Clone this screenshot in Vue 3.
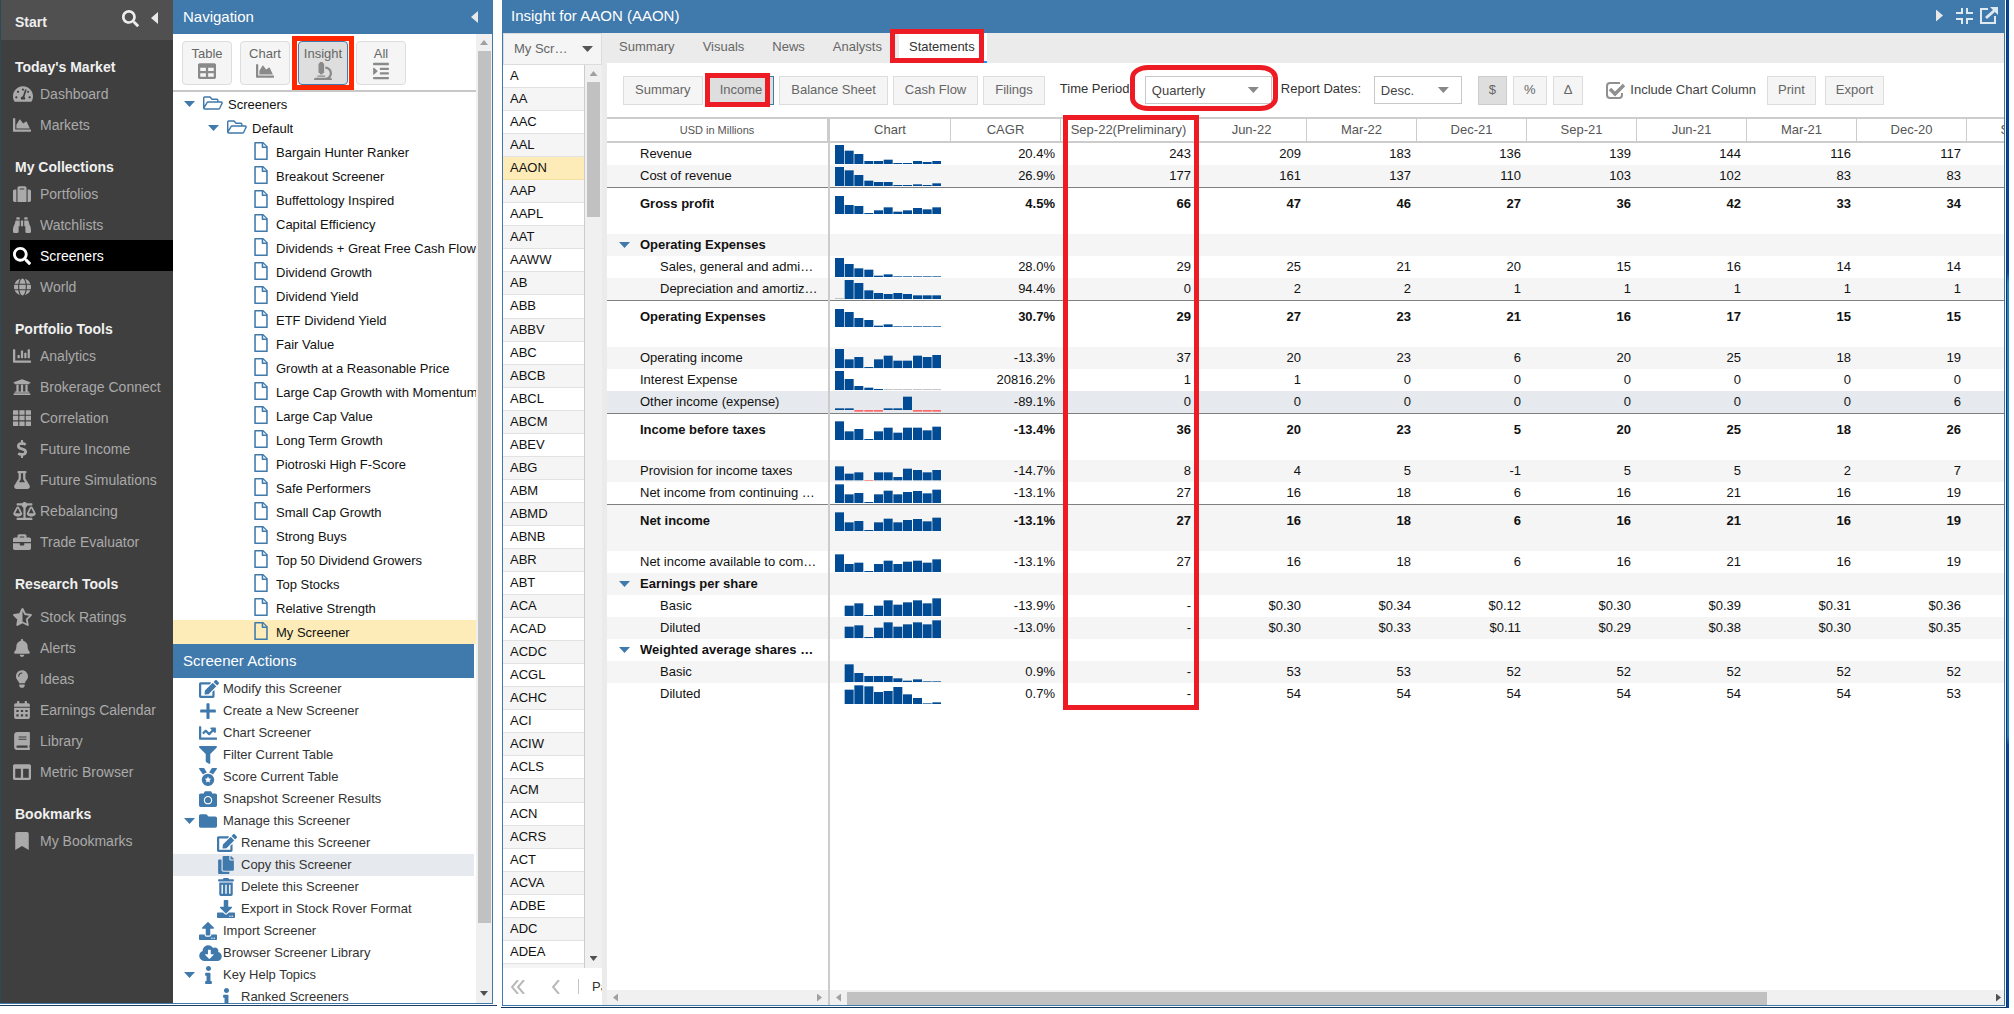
<script setup>
import { h, ref } from 'vue'

const icons = {
  search: [512, 'M505 442.7L405.3 343c-4.5-4.5-10.6-7-17-7H372c27.6-35.3 44-79.7 44-128C416 93.1 322.9 0 208 0S0 93.1 0 208s93.1 208 208 208c48.3 0 92.7-16.4 128-44v16.3c0 6.4 2.5 12.5 7 17l99.7 99.7c9.4 9.4 24.6 9.4 33.9 0l28.3-28.3c9.4-9.4 9.4-24.6.1-34zM208 336c-70.7 0-128-57.2-128-128 0-70.7 57.2-128 128-128 70.7 0 128 57.2 128 128 0 70.7-57.2 128-128 128z'],
  area: [512, 'M500 384c6.6 0 12 5.4 12 12v40c0 6.6-5.4 12-12 12H12c-6.6 0-12-5.4-12-12V76c0-6.6 5.4-12 12-12h40c6.6 0 12 5.4 12 12v308h436zM372.7 159.5L288 216l-85.3-113.7c-5.1-6.8-15.5-6.3-19.9 1L96 248v104h384l-89.9-187.8c-3.2-6.5-11.4-8.7-17.4-4.7z'],
  bars: [512, 'M332.8 320h38.4c6.4 0 12.8-6.4 12.8-12.8V172.8c0-6.4-6.4-12.8-12.8-12.8h-38.4c-6.4 0-12.8 6.4-12.8 12.8v134.4c0 6.4 6.4 12.8 12.8 12.8zm96 0h38.4c6.4 0 12.8-6.4 12.8-12.8V76.8c0-6.4-6.4-12.8-12.8-12.8h-38.4c-6.4 0-12.8 6.4-12.8 12.8v230.4c0 6.4 6.4 12.8 12.8 12.8zm-288 0h38.4c6.4 0 12.8-6.4 12.8-12.8v-70.4c0-6.4-6.4-12.8-12.8-12.8h-38.4c-6.4 0-12.8 6.4-12.8 12.8v70.4c0 6.4 6.4 12.8 12.8 12.8zm96 0h38.4c6.4 0 12.8-6.4 12.8-12.8V108.8c0-6.4-6.4-12.8-12.8-12.8h-38.4c-6.4 0-12.8 6.4-12.8 12.8v198.4c0 6.4 6.4 12.8 12.8 12.8zM496 384H64V80c0-8.84-7.16-16-16-16H16C7.16 64 0 71.16 0 80v336c0 17.67 14.33 32 32 32h464c8.84 0 16-7.16 16-16v-32c0-8.84-7.16-16-16-16z'],
  gauge: [576, 'M288 32C128.94 32 0 160.94 0 320c0 52.8 14.25 102.26 39.06 144.8 5.61 9.62 16.3 15.2 27.44 15.2h443c11.14 0 21.83-5.58 27.44-15.2C561.75 422.26 576 372.8 576 320c0-159.06-128.94-288-288-288zm0 64c14.71 0 26.58 10.13 30.32 23.65-1.11 2.26-2.64 4.23-3.45 6.67l-9.22 27.67c-5.13 3.49-10.97 6.01-17.64 6.01-17.67 0-32-14.33-32-32S270.33 96 288 96zM96 384c-17.67 0-32-14.33-32-32s14.33-32 32-32 32 14.33 32 32-14.33 32-32 32zm48-160c-17.67 0-32-14.33-32-32s14.33-32 32-32 32 14.33 32 32-14.33 32-32 32zm246.77-72.41l-61.33 184C343.13 347.33 352 364.54 352 384c0 11.72-3.38 22.55-8.88 32H232.88c-5.5-9.45-8.88-20.28-8.88-32 0-33.94 26.5-61.43 59.9-63.59l61.34-184.01c4.17-12.56 17.73-19.45 30.36-15.17 12.57 4.19 19.35 17.79 15.17 30.36zm14.66 57.2l15.52-46.55c3.47-1.29 7.13-2.23 11.05-2.23 17.67 0 32 14.33 32 32s-14.33 32-32 32c-11.38-.01-20.89-6.28-26.57-15.22zM480 384c-17.67 0-32-14.33-32-32s14.33-32 32-32 32 14.33 32 32-14.33 32-32 32z'],
  suitcase: [512, 'M128 480h256V80c0-26.5-21.5-48-48-48H176c-26.5 0-48 21.5-48 48v400zm64-384h128v32H192V96zm320 80v256c0 26.5-21.5 48-48 48h-48V128h48c26.5 0 48 21.5 48 48zM96 480H48c-26.5 0-48-21.5-48-48V176c0-26.5 21.5-48 48-48h48v352z'],
  binoculars: [512, 'M416 48c0-8.84-7.16-16-16-16h-64c-8.84 0-16 7.16-16 16v48h96V48zM63.91 159.99C61.4 253.84 3.46 274.22 0 404v44c0 17.67 14.33 32 32 32h96c17.67 0 32-14.33 32-32V288h32V128H95.84c-17.63 0-31.45 14.37-31.93 31.99zm384.18 0c-.48-17.62-14.3-31.99-31.93-31.99H320v160h32v160c0 17.67 14.33 32 32 32h96c17.67 0 32-14.33 32-32v-44c-3.46-129.78-61.4-150.16-63.91-244.01zM176 32h-64c-8.84 0-16 7.16-16 16v48h96V48c0-8.84-7.16-16-16-16zm48 256h64V128h-64v160z'],
  globe: [496, 'M336.5 160C322 70.7 287.8 8 248 8s-74 62.7-88.5 152h177zM152 256c0 22.2 1.2 43.5 3.3 64h185.3c2.1-20.5 3.3-41.8 3.3-64s-1.2-43.5-3.3-64H155.3c-2.1 20.5-3.3 41.8-3.3 64zm324.7-96c-28.6-67.9-86.5-120.4-158-141.6 24.4 33.8 41.2 84.7 50 141.6h108zM177.2 18.4C105.8 39.6 47.8 92.1 19.3 160h108c8.7-56.9 25.5-107.8 49.9-141.6zM487.4 192H372.7c2.1 21 3.3 42.5 3.3 64s-1.2 43-3.3 64h114.6c5.5-20.5 8.6-41.8 8.6-64s-3.1-43.5-8.5-64zM120 256c0-21.5 1.2-43 3.3-64H8.6C3.2 212.5 0 233.8 0 256s3.2 43.5 8.6 64h114.6c-2-21-3.2-42.5-3.2-64zm39.5 96c14.5 89.3 48.7 152 88.5 152s74-62.7 88.5-152h-177zm159.3 141.6c71.4-21.2 129.4-73.7 158-141.6h-108c-8.8 56.9-25.6 107.8-50 141.6zM19.3 352c28.6 67.9 86.5 120.4 158 141.6-24.4-33.8-41.2-84.7-50-141.6h-108z'],
  bank: [512, 'M496 128v16a8 8 0 0 1-8 8h-24v12c0 6.627-5.373 12-12 12H60c-6.627 0-12-5.373-12-12v-12H24a8 8 0 0 1-8-8v-16a8 8 0 0 1 4.941-7.392l232-88a7.996 7.996 0 0 1 6.118 0l232 88A8 8 0 0 1 496 128zm-24 304H40c-13.255 0-24 10.745-24 24v16a8 8 0 0 0 8 8h464a8 8 0 0 0 8-8v-16c0-13.255-10.745-24-24-24zM96 192v192H60c-6.627 0-12 5.373-12 12v20h416v-20c0-6.627-5.373-12-12-12h-36V192h-64v192h-64V192h-64v192h-64V192H96z'],
  grid: [512, 'M16 32h133v128H0V48q0-16 16-16zM181 32h149v128H181zM362 32h134q16 0 16 16v112H362zM0 192h149v128H0zM181 192h149v128H181zM362 192h150v128H362zM0 352h149v128H16q-16 0-16-16zM181 352h149v128H181zM362 352h150v112q0 16-16 16H362z'],
  dollar: [288, 'M209.2 233.4l-108-31.6C88.7 198.2 80 186.5 80 173.5c0-16.3 13.2-29.5 29.5-29.5h66.3c12.2 0 24.2 3.7 34.2 10.5 6.1 4.1 14.3 3.1 19.5-2l34.8-34c7.1-6.9 6.1-18.4-1.8-24.5C238 74.8 207.4 64.1 176 64V16c0-8.8-7.2-16-16-16h-32c-8.8 0-16 7.2-16 16v48h-2.5C45.8 64-5.4 118.7.5 183.6c4.2 46.1 39.4 83.6 83.8 96.6l102.5 30c12.5 3.7 21.2 15.3 21.2 28.3 0 16.3-13.2 29.5-29.5 29.5h-66.3C100 368 88 364.3 78 357.5c-6.1-4.1-14.3-3.1-19.5 2l-34.8 34c-7.1 6.9-6.1 18.4 1.8 24.5 24.5 19.2 55.1 29.9 86.5 30v48c0 8.8 7.2 16 16 16h32c8.8 0 16-7.2 16-16v-48.2c46.6-.9 90.3-28.6 105.7-72.7 21.5-61.6-14.6-124.8-72.5-141.7z'],
  flask: [448, 'M437.2 403.5L320 215V64h8c13.3 0 24-10.7 24-24V24c0-13.3-10.7-24-24-24H120c-13.3 0-24 10.7-24 24v16c0 13.3 10.7 24 24 24h8v151L10.8 403.5C-18.5 450.6 15.3 512 70.9 512h306.2c55.7 0 89.4-61.5 60.1-108.5zM137.9 320l48.2-77.6c3.7-5.2 5.8-11.6 5.8-18.4V64h64v160c0 6.9 2.2 13.2 5.8 18.4l48.2 77.6h-172z'],
  scale: [640, 'M256 336h-.02c0-16.18 1.34-8.73-85.05-181.51-17.65-35.29-68.19-35.36-85.87 0C-2.06 328.75.02 320.33.02 336H0c0 44.18 57.31 80 128 80s128-35.82 128-80zM128 176l72 144H56l72-144zm511.98 160c0-16.18 1.34-8.73-85.05-181.51-17.65-35.29-68.19-35.36-85.87 0-87.12 174.26-85.04 165.84-85.04 181.51H384c0 44.18 57.31 80 128 80s128-35.82 128-80h-.02zM440 320l72-144 72 144H440zm88 128H352V153.25c23.51-10.29 41.16-31.48 46.39-57.25H528c8.84 0 16-7.16 16-16V48c0-8.84-7.16-16-16-16H383.64C369.04 12.68 346.09 0 320 0s-49.04 12.68-63.64 32H112c-8.84 0-16 7.16-16 16v32c0 8.84 7.16 16 16 16h129.61c5.23 25.76 22.87 46.96 46.39 57.25V448H112c-8.84 0-16 7.16-16 16v32c0 8.84 7.16 16 16 16h416c8.84 0 16-7.16 16-16v-32c0-8.84-7.16-16-16-16z'],
  briefcase: [512, 'M320 336c0 8.84-7.16 16-16 16h-96c-8.84 0-16-7.16-16-16v-48H0v144c0 25.6 22.4 48 48 48h416c25.6 0 48-22.4 48-48V288H320v48zm144-208h-80V80c0-25.6-22.4-48-48-48H176c-25.6 0-48 22.4-48 48v48H48c-25.6 0-48 22.4-48 48v80h512v-80c0-25.6-22.4-48-48-48zm-144 0H192V96h128v32z'],
  star: [536, 'M268 0q18 0 26 16l67 136 150 22q30 6 23 34-2 7-8 12L418 326l26 149q3 32-28 34-7 0-14-4l-134-70-134 70q-30 13-42-16-1-6 0-14l26-149L10 220q-20-22 0-42 6-4 15-4l150-22L242 16q8-16 26-16zM268 382l118 62-23-131 96-93-133-19L268 82z'],
  bell: [448, 'M224 512c35.32 0 63.97-28.65 63.97-64H160.03c0 35.35 28.65 64 63.97 64zm215.39-149.71c-19.32-20.76-55.47-51.99-55.47-154.29 0-77.7-54.48-139.9-127.94-155.16V32c0-17.67-14.32-32-31.98-32s-31.98 14.33-31.98 32v20.84C118.56 68.1 64.08 130.3 64.08 208c0 102.3-36.15 133.53-55.47 154.29-6 6.45-8.66 14.16-8.61 21.71.11 16.4 12.98 32 32.1 32h383.8c19.12 0 32-15.6 32.1-32 .05-7.55-2.61-15.27-8.61-21.71z'],
  bulb: [352, 'M96.06 454.35c.01 6.29 1.87 12.45 5.36 17.69l17.09 25.69a31.99 31.99 0 0 0 26.64 14.28h61.71a31.99 31.99 0 0 0 26.64-14.28l17.09-25.69a31.989 31.989 0 0 0 5.36-17.69l.04-38.35H96.01l.05 38.35zM0 176c0 44.37 16.45 84.85 43.56 115.78 16.52 18.85 42.36 58.23 52.21 91.45.04.26.07.52.11.78h160.24c.04-.26.07-.51.11-.78 9.85-33.22 35.69-72.6 52.21-91.45C335.55 260.85 352 220.37 352 176 352 78.61 272.91-.3 175.45 0 73.44.31 0 82.97 0 176zm176-80c-44.11 0-80 35.89-80 80 0 8.84-7.16 16-16 16s-16-7.16-16-16c0-61.76 50.24-112 112-112 8.84 0 16 7.16 16 16s-7.16 16-16 16z'],
  calendar: [448, 'M96 0h40q12 0 12 12v52h152V12q0-12 12-12h40q12 0 12 12v52h36q48 0 48 48v48H0v-48q0-48 48-48h36V12q0-12 12-12zM0 192h448v272q0 48-48 48H48q-48 0-48-48zM64 256v60h64v-60zM192 256v60h64v-60zM320 256v60h64v-60zM64 380v60h64v-60zM192 380v60h64v-60zM320 380v60h64v-60z'],
  book: [448, 'M96 0h328q24 0 24 24v336q0 12-10 20-8 28 0 56 10 4 10 18v34q0 24-24 24H96Q0 512 0 416V96Q0 0 96 0zM128 128v30h224v-30zM128 192v30h224v-30zM96 384q-32 4-32 32t32 32h288q-6-32 0-64z'],
  columns: [512, 'M464 32H48C21.49 32 0 53.49 0 80v352c0 26.51 21.49 48 48 48h416c26.51 0 48-21.49 48-48V80c0-26.51-21.49-48-48-48zM224 416H64V160h160v256zm224 0H288V160h160v256z'],
  bookmark: [384, 'M0 512V48C0 21.49 21.49 0 48 0h288c26.51 0 48 21.49 48 48v464L192 400 0 512z'],
  table: [512, 'M464 32H48C21.49 32 0 53.49 0 80v352c0 26.51 21.49 48 48 48h416c26.51 0 48-21.49 48-48V80c0-26.51-21.49-48-48-48zM224 416H64v-96h160v96zm0-160H64v-96h160v96zm224 160H288v-96h160v96zm0-160H288v-96h160v96z'],
  microscope: [512, 'M160 320h12v16c0 8.84 7.16 16 16 16h40c8.84 0 16-7.16 16-16v-16h12c17.67 0 32-14.33 32-32V64c0-17.67-14.33-32-32-32V16c0-8.84-7.16-16-16-16h-64c-8.84 0-16 7.16-16 16v16c-17.67 0-32 14.33-32 32v224c0 17.67 14.33 32 32 32zm304 128h-1.29C493.24 413.99 512 369.2 512 320c0-105.88-86.12-192-192-192v64c70.58 0 128 57.42 128 128s-57.42 128-128 128H48c-26.51 0-48 21.49-48 48 0 8.84 7.16 16 16 16h480c8.84 0 16-7.16 16-16 0-26.51-21.49-48-48-48zm-360-32h208c4.42 0 8-3.58 8-8v-16c0-4.42-3.58-8-8-8H104c-4.42 0-8 3.58-8 8v16c0 4.42 3.58 8 8 8z'],
  indent: [448, 'M12 24h424q12 0 12 12v42q0 12-12 12H12Q0 90 0 78V36q0-12 12-12zM204 160h232q12 0 12 12v40q0 12-12 12H204q-12 0-12-12v-40q0-12 12-12zM204 290h232q12 0 12 12v40q0 12-12 12H204q-12 0-12-12v-40q0-12 12-12zM12 424h424q12 0 12 12v42q0 12-12 12H12q-12 0-12-12v-42q0-12 12-12zM0 176q4-24 27-12l96 85q10 11 0 22l-96 86q-23 10-27-12z'],
  edit: [576, 'M402.6 83.2l90.2 90.2c3.8 3.8 3.8 10 0 13.8L274.4 405.6l-92.8 10.3c-12.4 1.4-22.9-9.1-21.5-21.5l10.3-92.8L388.8 83.2c3.8-3.8 10-3.8 13.8 0zm162-22.9l-48.8-48.8c-15.2-15.2-39.9-15.2-55.2 0l-35.4 35.4c-3.8 3.8-3.8 10 0 13.8l90.2 90.2c3.8 3.8 10 3.8 13.8 0l35.4-35.4c15.2-15.3 15.2-40 0-55.2zM384 346.2V448H64V128h229.8c3.2 0 6.2-1.3 8.5-3.5l40-40c7.6-7.6 2.2-20.5-8.5-20.5H48C21.5 64 0 85.5 0 112v352c0 26.5 21.5 48 48 48h352c26.5 0 48-21.5 48-48V306.2c0-10.7-12.9-16-20.5-8.5l-40 40c-2.2 2.3-3.5 5.3-3.5 8.5z'],
  plus: [448, 'M424 212H268V56q0-24-24-24h-40q-24 0-24 24v156H24q-24 0-24 24v40q0 24 24 24h156v156q0 24 24 24h40q24 0 24-24V300h156q24 0 24-24v-40q0-24-24-24z'],
  line: [512, 'M496 384H64V80c0-8.84-7.16-16-16-16H16C7.16 64 0 71.16 0 80v336c0 17.67 14.33 32 32 32h464c8.84 0 16-7.16 16-16v-32c0-8.84-7.16-16-16-16zM464 96H345.94c-21.38 0-32.09 25.85-16.97 40.97l32.4 32.4L288 242.75l-73.37-73.37c-12.5-12.5-32.76-12.5-45.25 0l-68.69 68.69c-6.25 6.25-6.25 16.38 0 22.63l22.62 22.62c6.25 6.25 16.38 6.25 22.63 0L192 237.25l73.37 73.37c12.5 12.5 32.76 12.5 45.25 0l96-96 32.4 32.4c15.12 15.12 40.97 4.41 40.97-16.97V112c.01-8.84-7.15-16-15.99-16z'],
  filter: [512, 'M487.976 0H24.028C2.71 0-8.047 25.866 7.058 40.971L192 225.941V432c0 7.831 3.821 15.17 10.237 19.662l80 55.98C298.02 518.69 320 507.493 320 487.98V225.941l184.947-184.97C520.021 25.896 509.338 0 487.976 0z'],
  medal: [512, 'M223.75 130.75L154.62 15.54A31.997 31.997 0 0 0 127.18 0H16.03C3.08 0-4.5 14.57 2.92 25.18l111.27 158.96c29.72-27.77 67.52-46.83 109.56-53.39zM495.97 0H384.82c-11.24 0-21.66 5.9-27.44 15.54l-69.13 115.21c42.04 6.56 79.84 25.62 109.56 53.38L509.08 25.18C516.5 14.57 508.92 0 495.97 0zM256 160c-97.2 0-176 78.8-176 176s78.8 176 176 176 176-78.8 176-176-78.8-176-176-176zM256 240l28 57 63 9-46 44 11 63-56-30-56 30 11-63-46-44 63-9z'],
  camera: [512, 'M512 144v288c0 26.5-21.5 48-48 48H48c-26.5 0-48-21.5-48-48V144c0-26.5 21.5-48 48-48h88l12.3-32.9c7-18.7 24.9-31.1 44.9-31.1h125.5c20 0 37.9 12.4 44.9 31.1L376 96h88c26.5 0 48 21.5 48 48zM376 288c0-66.2-53.8-120-120-120s-120 53.8-120 120 53.8 120 120 120 120-53.8 120-120zm-32 0c0 48.5-39.5 88-88 88s-88-39.5-88-88 39.5-88 88-88 88 39.5 88 88z'],
  folder: [512, 'M464 128H272l-64-64H48C21.49 64 0 85.49 0 112v288c0 26.51 21.49 48 48 48h416c26.51 0 48-21.49 48-48V176c0-26.51-21.49-48-48-48z'],
  copy: [448, 'M320 448v40c0 13.255-10.745 24-24 24H24c-13.255 0-24-10.745-24-24V120c0-13.255 10.745-24 24-24h72v296c0 30.879 25.121 56 56 56h168zm0-344V0H152c-13.255 0-24 10.745-24 24v368c0 13.255 10.745 24 24 24h272c13.255 0 24-10.745 24-24V128H344c-13.2 0-24-10.8-24-24zm120.971-31.029L375.029 7.029A24 24 0 0 0 358.059 0H352v96h96v-6.059a24 24 0 0 0-7.029-16.97z'],
  trash: [448, 'M16 32h120l12-22q6-10 18-10h116q12 0 18 10l12 22h120q16 0 16 16v32q0 16-16 16H16Q0 96 0 80V48q0-16 16-16zM32 128h384v336q0 48-48 48H80q-48 0-48-48zM96 190v256h40V190zM204 190v256h40V190zM312 190v256h40V190z'],
  download: [512, 'M216 0h80c13.3 0 24 10.7 24 24v168h87.7c17.8 0 26.7 21.5 14.1 34.1L269.7 378.3c-7.5 7.5-19.8 7.5-27.3 0L90.1 226.1c-12.6-12.6-3.7-34.1 14.1-34.1H192V24c0-13.3 10.7-24 24-24zm296 376v112c0 13.3-10.7 24-24 24H24c-13.3 0-24-10.7-24-24V376c0-13.3 10.7-24 24-24h146.7l49 49c20.1 20.1 52.5 20.1 72.6 0l49-49H488c13.3 0 24 10.7 24 24zm-124 88c0-11-9-20-20-20s-20 9-20 20 9 20 20 20 20-9 20-20zm64 0c0-11-9-20-20-20s-20 9-20 20 9 20 20 20 20-9 20-20z'],
  upload: [512, 'M296 384h-80c-13.3 0-24-10.7-24-24V192h-87.7c-17.8 0-26.7-21.5-14.1-34.1L242.3 5.7c7.5-7.5 19.8-7.5 27.3 0l152.2 152.2c12.6 12.6 3.7 34.1-14.1 34.1H320v168c0 13.3-10.7 24-24 24zm216-8v112c0 13.3-10.7 24-24 24H24c-13.3 0-24-10.7-24-24V376c0-13.3 10.7-24 24-24h136v8c0 30.9 25.1 56 56 56h80c30.9 0 56-25.1 56-56v-8h136c13.3 0 24 10.7 24 24zm-124 88c0-11-9-20-20-20s-20 9-20 20 9 20 20 20 20-9 20-20zm64 0c0-11-9-20-20-20s-20 9-20 20 9 20 20 20 20-9 20-20z'],
  cloud: [640, 'M537.6 226.6c4.1-10.7 6.4-22.4 6.4-34.6 0-53-43-96-96-96-19.7 0-38.1 6-53.3 16.2C367 64.2 315.3 32 256 32c-88.4 0-160 71.6-160 160 0 2.7.1 5.4.2 8.1C40.2 219.8 0 273.2 0 336c0 79.5 64.5 144 144 144h368c70.7 0 128-57.3 128-128 0-61.9-44-113.6-102.4-125.4zm-132.9 88.7L299.3 420.7c-6.2 6.2-16.4 6.2-22.6 0L171.3 315.3c-10.1-10.1-2.9-27.3 11.3-27.3H248V176c0-8.8 7.2-16 16-16h48c8.8 0 16 7.2 16 16v112h65.4c14.2 0 21.4 17.2 11.3 27.3z'],
  info: [192, 'M20 424.229h20V279.771H20c-11.046 0-20-8.954-20-20V212c0-11.046 8.954-20 20-20h112c11.046 0 20 8.954 20 20v212.229h20c11.046 0 20 8.954 20 20V492c0 11.046-8.954 20-20 20H20c-11.046 0-20-8.954-20-20v-47.771c0-11.046 8.954-20 20-20zM96 0C56.235 0 24 32.235 24 72s32.235 72 72 72 72-32.235 72-72S135.764 0 96 0z'],
  file: [384, 'M40 0h216L384 128v360q0 24-24 24H24q-24 0-24-24V24Q0 0 24 0zM44 44v424h296V172H236q-24 0-24-24V44zM256 48v80h80z'],
  openFolder: [576, 'M48 64h160l64 64h128q48 0 48 48v32h84q44 8 40 52l-76 160q-14 28-44 28H48q-48 0-48-48V112q0-48 48-48zM42 112v218l58-98q14-24 44-24h262v-30q0-8-8-8H254l-64-64H50q-8 0-8 6zM150 250q-10 0-16 8L48 402q0 4 6 4h396q10 0 14-8l66-140q0-8-6-8z']
}

const Icon = ({ name, size = 18 }) => {
  const [w, d] = icons[name]
  return h('svg', { viewBox: `0 0 ${w} 512`, width: Math.round((w * size) / 512), height: size, 'aria-hidden': 'true' }, [
    h('path', { d, fill: 'currentColor', 'fill-rule': 'evenodd' })
  ])
}
Icon.props = ['name', 'size']

const menu = [
  { title: "Today's Market", items: [['gauge', 'Dashboard'], ['area', 'Markets']] },
  { title: 'My Collections', items: [['suitcase', 'Portfolios'], ['binoculars', 'Watchlists'], ['search', 'Screeners'], ['globe', 'World']] },
  { title: 'Portfolio Tools', items: [['bars', 'Analytics'], ['bank', 'Brokerage Connect'], ['grid', 'Correlation'], ['dollar', 'Future Income'], ['flask', 'Future Simulations'], ['scale', 'Rebalancing'], ['briefcase', 'Trade Evaluator']] },
  { title: 'Research Tools', roomy: true, items: [['star', 'Stock Ratings'], ['bell', 'Alerts'], ['bulb', 'Ideas'], ['calendar', 'Earnings Calendar'], ['book', 'Library'], ['columns', 'Metric Browser']] },
  { title: 'Bookmarks', items: [['bookmark', 'My Bookmarks']] }
]

const modes = [['table', 'Table'], ['area', 'Chart'], ['microscope', 'Insight'], ['indent', 'All']]

const screeners = ['Bargain Hunter Ranker', 'Breakout Screener', 'Buffettology Inspired', 'Capital Efficiency', 'Dividends + Great Free Cash Flow', 'Dividend Growth', 'Dividend Yield', 'ETF Dividend Yield', 'Fair Value', 'Growth at a Reasonable Price', 'Large Cap Growth with Momentum', 'Large Cap Value', 'Long Term Growth', 'Piotroski High F-Score', 'Safe Performers', 'Small Cap Growth', 'Strong Buys', 'Top 50 Dividend Growers', 'Top Stocks', 'Relative Strength', 'My Screener']

const actions = [
  { icon: 'edit', text: 'Modify this Screener' },
  { icon: 'plus', text: 'Create a New Screener' },
  { icon: 'line', text: 'Chart Screener' },
  { icon: 'filter', text: 'Filter Current Table' },
  { icon: 'medal', text: 'Score Current Table' },
  { icon: 'camera', text: 'Snapshot Screener Results' },
  { icon: 'folder', text: 'Manage this Screener', open: true },
  { icon: 'edit', text: 'Rename this Screener', sub: true },
  { icon: 'copy', text: 'Copy this Screener', sub: true, hot: true },
  { icon: 'trash', text: 'Delete this Screener', sub: true },
  { icon: 'download', text: 'Export in Stock Rover Format', sub: true },
  { icon: 'upload', text: 'Import Screener' },
  { icon: 'cloud', text: 'Browser Screener Library' },
  { icon: 'info', text: 'Key Help Topics', open: true },
  { icon: 'info', text: 'Ranked Screeners', sub: true }
]

const tickers = 'A AA AAC AAL AAON AAP AAPL AAT AAWW AB ABB ABBV ABC ABCB ABCL ABCM ABEV ABG ABM ABMD ABNB ABR ABT ACA ACAD ACDC ACGL ACHC ACI ACIW ACLS ACM ACN ACRS ACT ACVA ADBE ADC ADEA'.split(' ')

const tabs = ['Summary', 'Visuals', 'News', 'Analysts', 'Statements']
const reports = ['Summary', 'Income', 'Balance Sheet', 'Cash Flow', 'Filings']
const periods = ['Sep-22(Preliminary)', 'Jun-22', 'Mar-22', 'Dec-21', 'Sep-21', 'Jun-21', 'Mar-21', 'Dec-20', 'Sep-20']

const netBars = [56, 26, 30, 3, 26, 37, 26, 33, 36, 29, 40]
const rows = [
  { name: 'Revenue', bars: [57, 40, 30, 9, 9, 13, 3, 3, 9, 6, 9], v: '20.4% 243 209 183 136 139 144 116 117' },
  { name: 'Cost of revenue', bars: [57, 47, 33, 16, 12, 12, 3, 3, 5, 3, 8], v: '26.9% 177 161 137 110 103 102 83 83' },
  { name: 'Gross profit', kind: 'total', bars: [54, 27, 24, 3, 11, 20, 7, 11, 18, 14, 20], v: '4.5% 66 47 46 27 36 42 33 34' },
  { name: 'Operating Expenses', kind: 'group' },
  { name: 'Sales, general and administrative', kind: 'child', bars: [57, 39, 26, 22, 4, 8, 2, 2, 2, 2, 2], v: '28.0% 29 25 21 20 15 16 14 14' },
  { name: 'Depreciation and amortization', kind: 'child', bars: [0, 57, 48, 26, 18, 15, 18, 15, 11, 11, 11], v: '94.4% 0 2 2 1 1 1 1 1' },
  { name: 'Operating Expenses', kind: 'total', bars: [54, 45, 27, 21, 4, 8, 2, 2, 2, 2, 2], v: '30.7% 29 27 23 21 16 17 15 15' },
  { name: 'Operating income', bars: [57, 26, 33, 3, 26, 37, 22, 22, 37, 33, 39], v: '-13.3% 37 20 23 6 20 25 18 19' },
  { name: 'Interest Expense', bars: [57, 33, 12, 7, 3, 0, 0, 0, 0, 0, 0], v: '20816.2% 1 1 0 0 0 0 0 0' },
  { name: 'Other income (expense)', hot: true, zero: 57, bars: [5, 5, -5, -5, -5, 5, 5, 40, -5, -5, -5], v: '-89.1% 0 0 0 0 0 0 0 6' },
  { name: 'Income before taxes', kind: 'total', bars: [56, 26, 33, 3, 26, 37, 22, 37, 37, 29, 40], v: '-13.4% 36 20 23 5 20 25 18 26' },
  { name: 'Provision for income taxes', zero: 61, bars: [42, 20, 24, -2, 24, 24, 10, 35, 31, 24, 31], v: '-14.7% 8 4 5 -1 5 5 2 7' },
  { name: 'Net income from continuing operations', bars: netBars, v: '-13.1% 27 16 18 6 16 21 16 19' },
  { name: 'Net income', kind: 'total', bars: netBars, v: '-13.1% 27 16 18 6 16 21 16 19' },
  { name: 'Net income available to common', bars: [53, 24, 28, 3, 24, 34, 24, 31, 34, 28, 38], v: '-13.1% 27 16 18 6 16 21 16 19' },
  { name: 'Earnings per share', kind: 'group' },
  { name: 'Basic', kind: 'child', bars: [null, 31, 38, 3, 31, 47, 34, 41, 47, 38, 53], v: '-13.9% - $0.30 $0.34 $0.12 $0.30 $0.39 $0.31 $0.36' },
  { name: 'Diluted', kind: 'child', bars: [null, 34, 38, 3, 31, 47, 34, 41, 47, 41, 53], v: '-13.0% - $0.30 $0.33 $0.11 $0.29 $0.38 $0.30 $0.35' },
  { name: 'Weighted average shares outstanding', kind: 'group' },
  { name: 'Basic', kind: 'child', bars: [null, 53, 27, 18, 18, 18, 11, 4, 8, 2, 2], v: '0.9% - 53 53 52 52 52 52 52' },
  { name: 'Diluted', kind: 'child', bars: [null, 43, 56, 53, 36, 39, 51, 29, 18, 2, 5], v: '0.7% - 54 54 54 54 54 54 53' }
].map((r) => ({ ...r, cells: r.v ? r.v.split(' ') : Array(9).fill('') }))

const rects = (row) => {
  const zero = row.zero ?? 63
  return row.bars
    .map((b, i) => ({ b, x: Math.round(i * 29.2) }))
    .filter(({ b }) => b !== null)
    .map(({ b, x }) => ({
      x,
      y: b > 0 ? zero - b : b < 0 ? zero : zero - 2,
      h: Math.abs(b) || 2,
      fill: b > 0 ? '#004b93' : b < 0 ? '#ff6666' : '#a8a8a8'
    }))
}

const period = ref('Quarterly')
const order = ref('Desc.')
const withChart = ref(true)
</script>

<template>
  <div class="page">
    <div class="left">
      <div class="left-body">
        <nav class="sidebar" aria-label="Main">
          <header class="start">
            <span>Start</span>
            <button type="button" aria-label="Search"><Icon name="search" :size="17" /></button>
            <button type="button" class="tri-left" aria-label="Collapse menu"></button>
          </header>
          <section v-for="g in menu" :key="g.title" :class="{ roomy: g.roomy }">
            <h2>{{ g.title }}</h2>
            <a v-for="[icon, text] in g.items" :key="text" href="#" :class="{ current: text === 'Screeners' }">
              <span class="slot"><Icon :name="icon" /></span>{{ text }}
            </a>
          </section>
        </nav>

        <section class="navigation">
          <header class="bar">
            <h1>Navigation</h1>
            <button type="button" class="tri-left" aria-label="Collapse navigation"></button>
          </header>
          <div class="nav-body">
            <div class="nav-scroll">
              <div class="modes">
                <button v-for="[icon, text] in modes" :key="text" type="button" :class="{ on: text === 'Insight' }">
                  {{ text }}
                  <Icon :name="icon" />
                  <i v-if="text === 'Insight'" class="ring"></i>
                </button>
              </div>
              <ul class="tree">
                <li class="root"><i class="caret"></i><Icon name="openFolder" /><a href="#">Screeners</a></li>
                <li class="branch"><i class="caret"></i><Icon name="openFolder" /><a href="#">Default</a></li>
                <li v-for="s in screeners" :key="s" class="leaf" :class="{ picked: s === 'My Screener' }">
                  <Icon name="file" /><a href="#">{{ s }}</a>
                </li>
              </ul>
              <h2 class="bar sub-bar">Screener Actions</h2>
              <ul class="actions">
                <li v-for="a in actions" :key="a.text" :class="{ sub: a.sub, hot: a.hot }">
                  <span class="gutter"><i v-if="a.open" class="caret"></i></span>
                  <span class="slot"><Icon :name="a.icon" /></span>
                  <a href="#">{{ a.text }}</a>
                </li>
              </ul>
            </div>
            <div class="vscroll">
              <i class="up"></i>
              <i class="thumb"></i>
              <i class="down"></i>
            </div>
          </div>
        </section>
      </div>
    </div>

    <div class="frame">
      <main class="insight">
        <header class="bar">
          <h1>Insight for AAON (AAON)</h1>
          <div class="tools">
            <button type="button" class="tri-right" aria-label="Next"></button>
            <button type="button" aria-label="Shrink">
              <svg width="17" height="16" viewBox="0 0 17 16" fill="none" stroke="currentColor" stroke-width="2"><path d="M0 5h6V0M17 5h-6V0M0 11h6v5M17 11h-6v5" /></svg>
            </button>
            <button type="button" aria-label="Open in new window">
              <svg width="18" height="17" viewBox="0 0 18 17" fill="none" stroke="currentColor" stroke-width="2"><path d="M8 2H1v14h14V9" /><path d="M6 11L15 3" stroke-width="3" /><path d="M10 0h8v8z" fill="currentColor" stroke="none" /></svg>
            </button>
          </div>
        </header>

        <div class="insight-body">
          <aside class="tickers">
            <button type="button" class="combo"><span>My Screener</span><i class="caret"></i></button>
            <div class="ticker-list">
              <ul>
                <li v-for="t in tickers" :key="t" :class="{ picked: t === 'AAON' }">{{ t }}</li>
              </ul>
              <div class="vscroll">
                <i class="up"></i>
                <i class="thumb short"></i>
                <i class="down"></i>
              </div>
            </div>
            <footer class="pager">
              <button type="button" aria-label="First page"><svg width="14" height="14" viewBox="0 0 14 14"><path d="M7 0L1 7l6 7M13 0L7 7l6 7" /></svg></button>
              <button type="button" aria-label="Previous page"><svg width="8" height="14" viewBox="0 0 8 14"><path d="M7 0L1 7l6 7" /></svg></button>
              <i></i>
              <span>Page</span>
            </footer>
          </aside>

          <section class="statements">
            <div class="tabs" role="tablist">
              <button v-for="t in tabs" :key="t" type="button" role="tab" :aria-selected="t === 'Statements'" :class="{ on: t === 'Statements' }">
                {{ t }}<i v-if="t === 'Statements'" class="ring"></i>
              </button>
            </div>

            <div class="toolbar">
              <div class="reports">
                <button v-for="r in reports" :key="r" type="button" class="btn" :class="{ on: r === 'Income' }">
                  {{ r }}<i v-if="r === 'Income'" class="ring"></i>
                </button>
              </div>
              <label class="time-label" for="period">Time Period:</label>
              <div class="pick period">
                <select id="period" v-model="period"><option>Quarterly</option><option>Annual</option></select>
                <i class="caret"></i>
                <i class="ring"></i>
              </div>
              <label class="date-label" for="order">Report Dates:</label>
              <div class="pick order">
                <select id="order" v-model="order"><option>Desc.</option><option>Asc.</option></select>
                <i class="caret"></i>
              </div>
              <div class="units">
                <button type="button" class="btn grey">$</button>
                <button type="button" class="btn">%</button>
                <button type="button" class="btn">Δ</button>
              </div>
              <label class="check">
                <input v-model="withChart" type="checkbox" />
                <svg width="19" height="17" viewBox="0 0 19 17" aria-hidden="true" fill="none" stroke="#909090"><path d="M14 1H4a3 3 0 0 0-3 3v9a3 3 0 0 0 3 3h9a3 3 0 0 0 3-3v-2" stroke-width="2" /><path d="M4 7l5 5 9-9" stroke-width="3.5" /></svg>
                Include Chart Column
              </label>
              <div class="output">
                <button type="button" class="btn">Print</button>
                <button type="button" class="btn">Export</button>
              </div>
            </div>

            <div class="grid">
              <div class="locked">
                <table>
                  <thead><tr><th class="small">USD in Millions</th></tr></thead>
                  <tbody>
                    <tr v-for="(r, i) in rows" :key="i" :class="[r.kind, { hot: r.hot }]">
                      <td>
                        <div class="name"><span class="toggle"><i v-if="r.kind === 'group'" class="caret"></i></span><span class="label">{{ r.name }}</span></div>
                      </td>
                    </tr>
                  </tbody>
                </table>
                <div class="hscroll"><i class="prev"></i><i class="next"></i></div>
              </div>
              <div class="scrolling">
                <table>
                  <colgroup>
                    <col class="c-chart" /><col class="c-num" /><col class="c-wide" />
                    <col v-for="n in 8" :key="n" class="c-num" />
                  </colgroup>
                  <thead>
                    <tr><th>Chart</th><th>CAGR</th><th v-for="p in periods" :key="p">{{ p }}</th></tr>
                  </thead>
                  <tbody>
                    <tr v-for="(r, i) in rows" :key="i" :class="[r.kind, { hot: r.hot }]">
                      <td class="spark">
                        <svg v-if="r.bars" width="106" height="22" viewBox="0 0 318 66">
                          <rect v-for="b in rects(r)" :key="b.x" :x="b.x" :y="b.y" width="27" :height="b.h" :fill="b.fill" />
                        </svg>
                      </td>
                      <td v-for="(c, j) in r.cells" :key="j">{{ c }}</td>
                      <td></td>
                    </tr>
                  </tbody>
                </table>
                <div class="hscroll wide"><i class="prev"></i><i class="thumb"></i><i class="next dark"></i></div>
              </div>
              <i class="ring column-ring"></i>
            </div>
          </section>
        </div>
      </main>
    </div>
    <div class="desktop-edge"></div>
  </div>
</template>

<style>
body {
  background: #fff;
}
</style>

<style scoped>
.page,
.page * {
  box-sizing: border-box;
}
.page {
  display: flex;
  height: 100vh;
  padding-right: 5px;
  overflow: hidden;
  font: 13px/22px "Liberation Sans", Arial, sans-serif;
  color: #111;
}
button {
  position: relative;
  margin: 0;
  padding: 0;
  border: 0;
  background: none;
  color: inherit;
  font: inherit;
}
a {
  color: inherit;
  text-decoration: none;
}
ul,
h1,
h2 {
  margin: 0;
  padding: 0;
  list-style: none;
  font-weight: normal;
}
svg {
  display: block;
  flex: none;
}
.caret {
  flex: none;
  width: 11px;
  height: 6px;
  background: #4079ac;
  clip-path: polygon(0 0, 100% 0, 50% 100%);
}
.tri-left,
.tri-right {
  width: 7px;
  height: 12px;
  background: #e8e8e8;
  clip-path: polygon(100% 0, 100% 100%, 0 50%);
}
.tri-right {
  clip-path: polygon(0 0, 100% 50%, 0 100%);
}
.ring {
  position: absolute;
  z-index: 2;
  border: 5px solid #ed1c24;
  pointer-events: none;
}
.slot {
  display: flex;
  flex: none;
  justify-content: safe center;
  width: 18px;
}
.bar {
  display: flex;
  align-items: center;
  justify-content: space-between;
  height: 34px;
  flex: none;
  padding: 0 14px 0 10px;
  background: #4079ac;
  color: #fff;
  font-size: 15px;
}
.bar h1 {
  font-size: 15px;
}

/* Left side */
.left {
  flex: none;
  width: 497px;
  margin-bottom: 8px;
  padding-bottom: 1px;
  border-bottom: 1px solid #1d3f66;
}
.left-body {
  display: flex;
  width: 493px;
  height: 100%;
  border-bottom: 1px solid #4079ac;
  overflow: hidden;
}
.sidebar {
  flex: none;
  width: 173px;
  border-left: 1px solid #2b4a58;
  background: #3f3f3f;
  color: #aaa;
  font-size: 14px;
}
.start {
  display: flex;
  align-items: center;
  height: 40px;
  padding: 0 15px 4px 14px;
  background: #505050;
  color: #ededed;
  font-weight: bold;
}
.start span {
  flex: 1;
  padding-top: 8px;
}
.start .tri-left {
  margin-left: 12px;
}
.sidebar section {
  padding-top: 16px;
}
.sidebar h2 {
  padding-left: 14px;
  line-height: 22px;
  font-size: 14px;
  font-weight: bold;
  color: #f0f0f0;
}
.sidebar .roomy h2 {
  padding-bottom: 6px;
}
.sidebar section a {
  display: flex;
  align-items: center;
  gap: 9px;
  height: 31px;
  margin-left: 9px;
  padding-left: 3px;
  white-space: nowrap;
}
.sidebar section a.current {
  background: #000;
  color: #fff;
}
.navigation {
  display: flex;
  flex: 1;
  flex-direction: column;
  min-width: 0;
  border-right: 1px solid #4079ac;
}
.nav-body {
  display: flex;
  flex: 1;
  min-height: 0;
}
.nav-scroll {
  flex: 1;
  min-width: 0;
  overflow: hidden;
}
.modes {
  display: flex;
  gap: 8px;
  height: 58px;
  padding: 7px 9px 0;
  border-bottom: 2px solid #c8c8c8;
}
.modes button {
  display: flex;
  flex-direction: column;
  align-items: center;
  width: 50px;
  height: 44px;
  padding-top: 1px;
  border: 1px solid #ddd;
  border-radius: 4px;
  background: #f5f5f5;
  color: #666;
  line-height: 21px;
}
.modes svg {
  color: #8a8a8a;
  margin-top: -2px;
}
.modes .on {
  border-color: #4079ac;
  background: #dedede;
}
.modes .ring {
  inset: -6px -7px;
  border-color: #ff2600;
}
.tree li {
  display: flex;
  align-items: center;
  height: 24px;
  white-space: nowrap;
}
.tree svg {
  margin-bottom: 2px;
  color: #4079ac;
}
.tree .caret {
  margin-right: 8px;
}
.tree a {
  padding-top: 2px;
}
.root {
  padding-left: 11px;
}
.branch {
  padding-left: 35px;
}
.root a,
.branch a {
  margin-left: 5px;
}
.leaf {
  padding-left: 81px;
  gap: 8px;
}
.picked {
  background: #feecb8;
}
.sub-bar {
  margin-right: 2px;
}
.actions {
  margin-right: 2px;
  color: #333;
}
.actions li {
  display: flex;
  align-items: center;
  height: 22px;
  white-space: nowrap;
}
.actions .gutter {
  width: 26px;
  padding-left: 11px;
  display: flex;
}
.actions .slot {
  margin-right: 6px;
  color: #4079ac;
}
.actions .sub .gutter {
  width: 44px;
}
.hot {
  background: #e6eaee;
}
.vscroll {
  display: flex;
  flex: none;
  flex-direction: column;
  align-items: center;
  width: 16px;
  background: #f0f0f0;
}
.vscroll .up,
.vscroll .down {
  flex: none;
  width: 8px;
  height: 5px;
  margin: 6px 0;
  background: #a0a0a0;
  clip-path: polygon(50% 0, 100% 100%, 0 100%);
}
.vscroll .down {
  margin: auto 0 7px;
  background: #505050;
  clip-path: polygon(0 0, 100% 0, 50% 100%);
}
.vscroll .thumb {
  width: 13px;
  height: 90%;
  background: #c1c1c1;
}

/* Insight window */
.frame {
  flex: 1;
  min-width: 0;
  margin: 0 0 6px 4px;
  padding: 0 1px 1px;
  border-right: 1px solid #14365c;
  border-bottom: 1px solid #14365c;
}
.desktop-edge {
  flex: none;
  width: 2px;
  margin-bottom: 6px;
  background: linear-gradient(#0047a8 0 27%, #1a84cc 28% 73%, #0047a8 74%);
}
.insight {
  display: flex;
  flex-direction: column;
  height: 100%;
  border: solid #4079ac;
  border-width: 0 1px 1px;
}
.insight > .bar {
  height: 33px;
  padding: 0 6px 2px 8px;
}
.tools {
  display: flex;
  align-items: center;
  gap: 7px;
  color: #dfe9f2;
}
.tools .tri-right {
  margin-right: 6px;
}
.insight-body {
  display: flex;
  flex: 1;
  min-height: 0;
}
.tickers {
  display: flex;
  flex: none;
  flex-direction: column;
  width: 104px;
  padding-right: 5px;
  background: #ebebeb;
}
.combo {
  display: flex;
  align-items: center;
  gap: 11px;
  height: 32px;
  padding: 0 8px 0 10px;
  border: 1px solid #dcdcdc;
  background: #f5f5f5;
  color: #666;
  text-align: left;
}
.combo span {
  width: 58px;
  overflow: hidden;
  text-overflow: ellipsis;
  white-space: nowrap;
}
.combo .caret {
  background: #555;
}
.ticker-list {
  display: flex;
  flex: 1;
  min-height: 0;
}
.ticker-list .vscroll {
  width: 17px;
}
.ticker-list ul {
  display: flex;
  flex: 1;
  flex-direction: column;
  padding-bottom: 4px;
  border-right: 1px solid #ccc;
  background: #f5f5f5;
}
.ticker-list li {
  flex: 1;
  min-height: 0;
  padding-left: 7px;
  border-bottom: 1px solid #e2e2e2;
  background: #fff;
}
.ticker-list li:nth-child(even) {
  background: #f5f5f5;
}
.ticker-list li.picked {
  background: #feecb8;
  border-color: #f3dfa0;
}
.vscroll .short {
  height: 15%;
}
.pager {
  display: flex;
  flex: none;
  align-items: center;
  height: 37px;
  padding-left: 8px;
  overflow: hidden;
  background: #fff;
  color: #333;
}
.pager svg {
  fill: none;
  stroke: #b8b8b8;
  stroke-width: 2px;
}
.pager button + button {
  margin-left: 27px;
}
.pager i {
  flex: none;
  width: 1px;
  height: 15px;
  margin: 0 13px 0 18px;
  background: #c4c4c4;
}
.statements {
  display: flex;
  flex: 1;
  flex-direction: column;
  min-width: 0;
}
.tabs {
  display: flex;
  flex: none;
  height: 30px;
  background: #ebebeb;
  color: #666;
}
.tabs button {
  padding: 0 14px 2px;
}
.tabs button:first-child {
  padding-left: 12px;
}
.tabs button.on {
  margin-left: 3px;
  padding: 0 12px 0 10px;
  border-bottom: 2px solid #1e90ff;
  background: #fff;
  color: #333;
}
.tabs .ring {
  inset: -4px 3px -2px -9px;
}
.toolbar {
  display: flex;
  flex: none;
  align-items: center;
  height: 54px;
  padding-left: 16px;
  color: #444;
  white-space: nowrap;
}
.btn {
  height: 29px;
  padding: 0 10px;
  border: 1px solid #ddd;
  background: #f5f5f5;
  color: #666;
}
.reports {
  display: flex;
  gap: 5px;
}
.reports .btn {
  padding: 0 11px;
}
.btn.on {
  border-color: #4079ac;
  background: #dedede;
}
.btn.grey {
  border-color: #ccc;
  background: #dedede;
}
.btn .ring {
  inset: -4px 3px -3px -4px;
}
.time-label {
  width: 85px;
  margin-left: 15px;
}
.date-label {
  width: 93px;
  margin-left: 9px;
}
.time-label,
.date-label {
  flex: none;
  color: #333;
  padding-bottom: 2px;
}
.pick {
  position: relative;
  flex: none;
}
.period {
  width: 127px;
}
.order {
  width: 88px;
}
.pick select {
  width: 100%;
  height: 28px;
  padding: 2px 6px 0;
  border: 1px solid #c8c8c8;
  border-radius: 0;
  appearance: none;
  background: #fff;
  color: #444;
  font: inherit;
}
.pick .caret {
  position: absolute;
  top: 11px;
  right: 13px;
  background: #888;
  pointer-events: none;
}
.pick .ring {
  inset: -11px -6px -7px -15px;
  border-radius: 18px / 13px;
}
.units {
  display: flex;
  gap: 6px;
  margin-left: 16px;
}
.check {
  position: relative;
  display: flex;
  align-items: center;
  gap: 5px;
  margin: 0 11px 0 23px;
}
.check input {
  position: absolute;
  left: 0;
  width: 18px;
  height: 18px;
  margin: 0;
  opacity: 0;
}
.output {
  display: flex;
  gap: 9px;
}

/* Statement grid */
.grid {
  position: relative;
  display: flex;
  flex: 1;
  min-height: 0;
}
.locked,
.scrolling {
  display: flex;
  flex-direction: column;
  justify-content: space-between;
}
.locked {
  flex: none;
  width: 223px;
  border-right: 2px solid #ccc;
}
.scrolling {
  flex: 1;
  min-width: 0;
  overflow: hidden;
}
table {
  width: 100%;
  border-spacing: 0;
  table-layout: fixed;
}
.scrolling table {
  width: 1247px;
}
.c-chart {
  width: 121px;
}
.c-num {
  width: 110px;
}
.c-wide {
  width: 136px;
}
th {
  height: 26px;
  padding: 0;
  border: solid #ccc;
  border-width: 2px 1px 2px 0;
  color: #555;
  font-weight: normal;
  text-align: center;
}
th.small {
  font-size: 11px;
}
td {
  height: 22px;
  padding: 0 6px 0 0;
  text-align: right;
}
tbody tr:nth-child(even) {
  background: #f5f5f5;
}
tbody tr.hot {
  background: #e6eaee;
}
.total td {
  height: 47px;
  padding-top: 5px;
  padding-bottom: 19px;
  border-top: 1px solid #808080;
}
.total,
.group {
  font-weight: bold;
}
td.spark {
  padding-left: 5px;
}
.name {
  display: flex;
  align-items: center;
  padding: 0 4px 0 12px;
  text-align: left;
}
.toggle {
  display: flex;
  flex: none;
  width: 21px;
}
.child .toggle {
  width: 41px;
}
.label {
  overflow: hidden;
  text-overflow: ellipsis;
  white-space: nowrap;
}
.hscroll {
  display: flex;
  flex: none;
  align-items: center;
  height: 15px;
  padding: 0 6px;
  background: #f0f0f0;
}
.hscroll .prev,
.hscroll .next {
  flex: none;
  width: 5px;
  height: 8px;
  background: #a0a0a0;
  clip-path: polygon(100% 0, 100% 100%, 0 50%);
}
.hscroll .next {
  margin-left: auto;
  clip-path: polygon(0 0, 100% 50%, 0 100%);
}
.hscroll .dark {
  background: #505050;
}
.hscroll.wide {
  padding-right: 3px;
}
.hscroll .thumb {
  width: 79%;
  height: 13px;
  margin: 2px 0 0 6px;
  background: #c1c1c1;
}
.column-ring {
  top: -2px;
  left: 456px;
  width: 136px;
  height: 595px;
}
</style>
